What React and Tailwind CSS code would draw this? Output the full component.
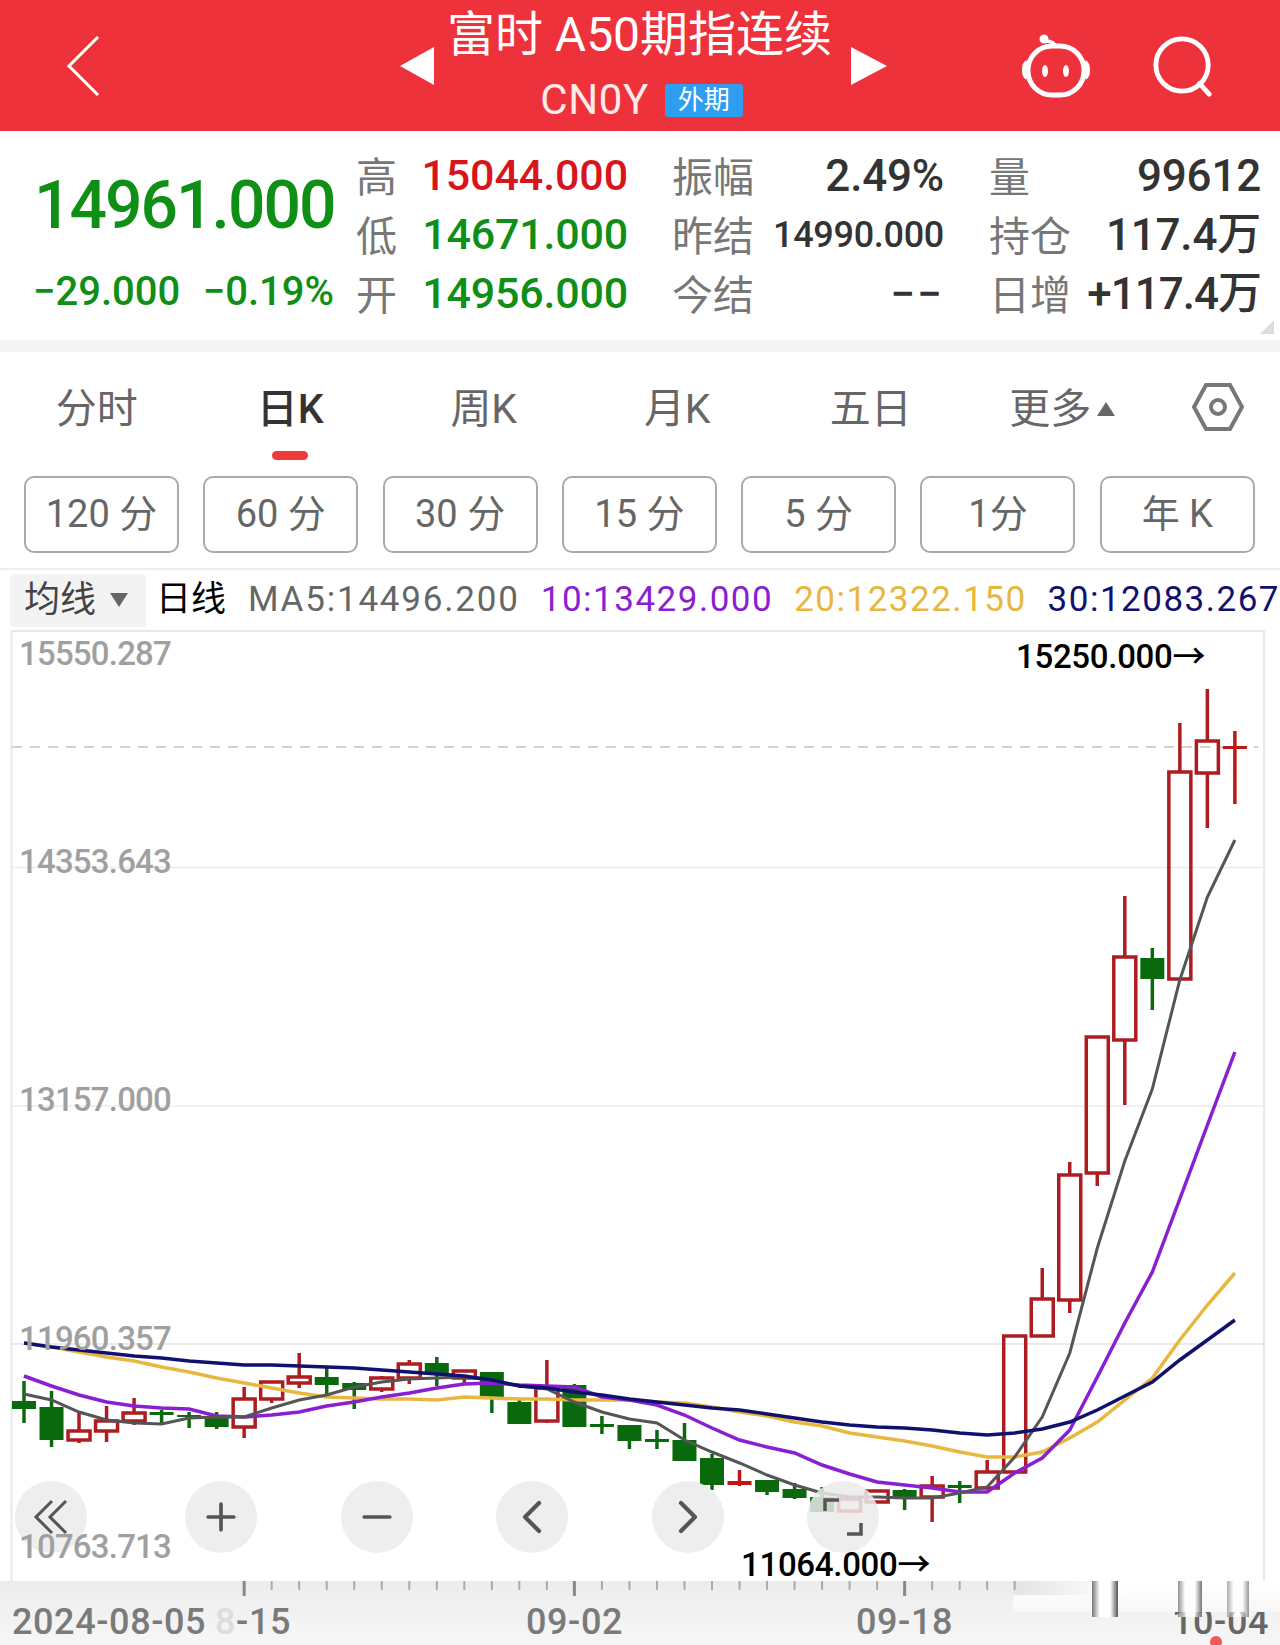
import React from "react";
import { ChevronLeft, ChevronRight, Minus, Plus } from "lucide-react";

const tabs = ["分时", "日K", "周K", "月K", "五日"];
const periods = ["120 分", "60 分", "30 分", "15 分", "5 分", "1分", "年 K"];

// [high, low, bodyTop, bodyBottom, type] r = hollow red, g = solid green, f = solid red
const candles = [
  [1381, 1423, 1401, 1409, "g"], [1391, 1447, 1407, 1440, "g"], [1413, 1443, 1431, 1440, "r"],
  [1406, 1442, 1421, 1431, "r"], [1398, 1425, 1413, 1421, "r"], [1410, 1424, 1412, 1415, "g"],
  [1412, 1428, 1415, 1417, "g"], [1412, 1429, 1417, 1427, "g"], [1387, 1438, 1399, 1427, "r"],
  [1382, 1403, 1382, 1399, "r"], [1353, 1388, 1377, 1383, "r"], [1368, 1395, 1377, 1385, "g"],
  [1382, 1409, 1383, 1390, "g"], [1376, 1392, 1378, 1389, "r"], [1360, 1384, 1364, 1378, "r"],
  [1357, 1386, 1363, 1375, "g"], [1371, 1383, 1371, 1378, "r"], [1372, 1413, 1372, 1398, "g"],
  [1398, 1424, 1402, 1424, "g"], [1360, 1423, 1388, 1421, "r"], [1384, 1427, 1385, 1427, "g"],
  [1416, 1434, 1424, 1427, "g"], [1425, 1449, 1425, 1441, "g"], [1430, 1449, 1439, 1442, "g"],
  [1423, 1461, 1440, 1461, "g"], [1454, 1490, 1458, 1485, "g"], [1470, 1486, 1481, 1485, "f"],
  [1480, 1495, 1480, 1492, "g"], [1483, 1499, 1489, 1498, "g"], [1487, 1512, 1497, 1512, "g"],
  [1497, 1513, 1499, 1511, "r"], [1490, 1502, 1491, 1502, "r"], [1489, 1510, 1490, 1498, "g"],
  [1476, 1522, 1486, 1497, "r"], [1481, 1503, 1485, 1488, "g"], [1460, 1488, 1472, 1488, "r"],
  [1335, 1472, 1336, 1472, "r"], [1268, 1337, 1299, 1336, "r"], [1162, 1313, 1175, 1300, "r"],
  [1036, 1186, 1037, 1173, "r"], [896, 1105, 957, 1040, "r"], [948, 1010, 958, 979, "g"],
  [723, 980, 772, 979, "r"], [689, 828, 741, 773, "r"], [731, 804, 746, 749, "f"],
];

const ma5 = [1394, 1400, 1412, 1420, 1423, 1424, 1418, 1417, 1417, 1408, 1400, 1395, 1387, 1382, 1379, 1378, 1377, 1380, 1386, 1389, 1402, 1412, 1419, 1423, 1440, 1452, 1463, 1475, 1485, 1493, 1497, 1497, 1498, 1498, 1493, 1487, 1457, 1417, 1353, 1248, 1161, 1089, 980, 897, 840];
const ma10 = [1376, 1386, 1395, 1402, 1406, 1408, 1409, 1416, 1417, 1415, 1412, 1406, 1402, 1397, 1393, 1388, 1384, 1383, 1385, 1386, 1387, 1397, 1400, 1405, 1415, 1428, 1440, 1447, 1453, 1465, 1474, 1482, 1485, 1488, 1492, 1492, 1473, 1458, 1430, 1377, 1323, 1272, 1199, 1125, 1052];
const ma20 = [1343, 1347, 1352, 1357, 1361, 1367, 1372, 1378, 1383, 1388, 1393, 1397, 1398, 1399, 1399, 1400, 1397, 1398, 1399, 1399, 1400, 1400, 1400, 1402, 1403, 1407, 1412, 1416, 1422, 1426, 1433, 1437, 1441, 1446, 1452, 1457, 1457, 1452, 1438, 1422, 1400, 1378, 1340, 1305, 1273];
const ma30 = [1343, 1347, 1350, 1353, 1356, 1358, 1361, 1363, 1365, 1365, 1366, 1367, 1368, 1370, 1372, 1374, 1376, 1380, 1386, 1388, 1392, 1395, 1399, 1402, 1405, 1408, 1410, 1414, 1418, 1422, 1425, 1427, 1428, 1430, 1433, 1435, 1433, 1429, 1422, 1410, 1396, 1382, 1360, 1340, 1320];

const cx = (i) => 24 + 27.52 * i;
const toPoints = (ys) => ys.map((y, i) => `${cx(i).toFixed(1)},${y}`).join(" ");

const Candle = ({ data, index }) => {
  const [high, low, top, bottom, type] = data;
  const x = cx(index);
  const color = type === "g" ? "#0b690d" : type === "f" ? "#c01616" : "#ad1c20";
  if (type === "r") {
    return (
      <g stroke={color} strokeWidth="3.5" fill="none">
        <line x1={x} x2={x} y1={high} y2={top} />
        <line x1={x} x2={x} y1={bottom} y2={low} />
        <rect x={x - 11} y={top} width="22" height={bottom - top} />
      </g>
    );
  }
  return (
    <g>
      <line x1={x} x2={x} y1={high} y2={low} stroke={color} strokeWidth="3.5" />
      <rect x={x - 12} y={top} width="24" height={bottom - top} fill={color} />
    </g>
  );
};

const Chart = () => (
  <svg viewBox="0 630 1280 951" className="block h-full w-full">
    <path d="M11.5 1581V631H1264V1581" fill="none" stroke="#e8e8e8" strokeWidth="2" />
    <line x1="12" x2="1264" y1="867.5" y2="867.5" stroke="#ececec" strokeWidth="1.5" />
    <line x1="12" x2="1264" y1="1106" y2="1106" stroke="#ececec" strokeWidth="1.5" />
    <line x1="12" x2="1264" y1="1344" y2="1344" stroke="#e4e4e4" strokeWidth="1.5" />
    <line x1="12" x2="1258" y1="747" y2="747" stroke="#c9c6b6" strokeWidth="1.5" strokeDasharray="10 8" />
    {candles.map((c, i) => (
      <Candle key={i} data={c} index={i} />
    ))}
    <polyline points={toPoints(ma20)} fill="none" stroke="#e8b740" strokeWidth="3.5" />
    <polyline points={toPoints(ma10)} fill="none" stroke="#8a1fd1" strokeWidth="3.5" />
    <polyline points={toPoints(ma5)} fill="none" stroke="#555555" strokeWidth="3" />
    <polyline points={toPoints(ma30)} fill="none" stroke="#10106e" strokeWidth="3.5" />
  </svg>
);

const AxisBackdrop = () => {
  const minor = [];
  for (let i = 8; i <= 36; i++) minor.push(i);
  return (
    <svg viewBox="0 1581 1280 64" className="absolute inset-0 h-full w-full">
      <defs>
        <linearGradient id="fade" x1="0" x2="1" y1="0" y2="0">
          <stop offset="0" stopColor="#e4e4e4" />
          <stop offset="1" stopColor="#ffffff" />
        </linearGradient>
        <linearGradient id="streak" x1="0" x2="1" y1="0" y2="0">
          <stop offset="0" stopColor="#777777" />
          <stop offset="0.3" stopColor="#ffffff" />
          <stop offset="0.7" stopColor="#ffffff" />
          <stop offset="1" stopColor="#555555" />
        </linearGradient>
        <linearGradient id="wash" x1="0" x2="0" y1="0" y2="1">
          <stop offset="0" stopColor="#ffffff" />
          <stop offset="1" stopColor="#f7f7f7" />
        </linearGradient>
      </defs>
      <rect x="1013" y="1581" width="267" height="31" fill="url(#wash)" />
      <rect x="1013" y="1581" width="110" height="14" fill="url(#fade)" />
      <rect x="1092" y="1581" width="26" height="36" fill="url(#streak)" />
      <rect x="1178" y="1581" width="24" height="36" fill="url(#streak)" opacity="0.8" />
      <rect x="1227" y="1581" width="22" height="36" fill="url(#streak)" opacity="0.6" />
      {minor.map((i) => {
        const major = i === 8 || i === 20 || i === 32;
        return (
          <line
            key={i}
            x1={cx(i)}
            x2={cx(i)}
            y1="1581"
            y2={major ? 1596 : 1590}
            stroke={major ? "#888888" : "#aaaaaa"}
            strokeWidth={major ? 3 : 2}
          />
        );
      })}
    </svg>
  );
};

const CircleButton = ({ left, children }) => (
  <div
    style={{ left }}
    className="absolute top-[851px] flex h-[72px] w-[72px] items-center justify-center rounded-full bg-[#ebebeb]/85 text-[#555555]"
  >
    {children}
  </div>
);

const StatRow = ({ label, value, valueClass }) => (
  <div className="flex h-[59px] items-center justify-between">
    <span className="pt-[4px] text-[41px] leading-[50px] text-[#777777]">{label}</span>
    <span className={valueClass}>{value}</span>
  </div>
);

const App = () => {
  const bigValue = "text-[44px] font-medium tracking-[-0.2px] text-[#333333]";
  const green = "text-[43px] font-medium tracking-[-0.2px] text-[#0f8f15]";
  const yLabel = "absolute left-[19px] text-[33px] font-medium tracking-[-0.8px] text-[#a0a0a0]";
  return (
    <div className="relative h-[1645px] w-[1280px] overflow-hidden bg-white font-['Roboto','Noto_Sans_CJK_SC',sans-serif]">
      <header className="flex h-[131px] items-center bg-[#ee323b] text-white">
        <svg viewBox="0 0 34 60" className="ml-[66px] h-[60px] w-[34px]" fill="none" stroke="white" strokeWidth="3">
          <path d="M32 1L3 30L32 59" />
        </svg>
        <svg viewBox="0 0 34 38" className="ml-[300px] h-[38px] w-[34px]">
          <path d="M34 0V38L0 19Z" fill="white" />
        </svg>
        <div className="flex w-[417px] flex-col items-center self-start pr-[6px] pt-[5px]">
          <div className="text-[48px] leading-[60px]">富时 A50期指连续</div>
          <div className="mt-[10px] flex items-center gap-[16px] pl-[4px]">
            <span className="text-[42px] leading-[50px] tracking-[0.6px] text-white/90">CN0Y</span>
            <span className="flex h-[33px] w-[78px] items-center justify-center rounded-[3px] bg-[#2f9df0] text-[26px]">外期</span>
          </div>
        </div>
        <svg viewBox="0 0 36 38" className="h-[38px] w-[36px]">
          <path d="M0 0V38L36 19Z" fill="white" />
        </svg>
        <svg viewBox="0 0 70 64" className="ml-[134px] h-[64px] w-[70px]" fill="none" stroke="white" strokeWidth="5">
          <circle cx="23" cy="5" r="3.5" fill="white" strokeWidth="2" />
          <path d="M24 7C30 7 34 9 34 13" strokeWidth="3.5" />
          <rect x="7" y="12" width="56" height="49" rx="24" />
          <path d="M6 28C2 30 2 42 6 44M64 28C68 30 68 42 64 44" strokeWidth="4" />
          <ellipse cx="24" cy="37" rx="3" ry="6" fill="white" stroke="none" />
          <ellipse cx="45" cy="37" rx="3" ry="6" fill="white" stroke="none" />
        </svg>
        <svg viewBox="0 0 64 64" className="ml-[61px] h-[62px] w-[62px]" fill="none" stroke="white" strokeWidth="5">
          <circle cx="31" cy="31" r="27" />
          <path d="M49 50L59 61" strokeLinecap="round" />
        </svg>
      </header>

      <section className="relative flex h-[209px] pt-[15px]">
        <div className="ml-[33px] flex w-[301px] flex-col">
          <div className="mt-[27px] pl-[1px] text-[66px] font-medium leading-[66px] tracking-[-2px] text-[#0f8f15]">14961.000</div>
          <div className="mt-[31px] flex justify-between text-[40px] font-medium leading-[44px] text-[#0f8f15]">
            <span>−29.000</span>
            <span>−0.19%</span>
          </div>
        </div>
        <div className="ml-[22px] w-[272px]">
          <StatRow label="高" value="15044.000" valueClass="text-[43px] font-medium tracking-[-0.1px] text-[#d8141c]" />
          <StatRow label="低" value="14671.000" valueClass={green} />
          <StatRow label="开" value="14956.000" valueClass={green} />
        </div>
        <div className="ml-[44px] w-[272px]">
          <StatRow label="振幅" value="2.49%" valueClass={bigValue} />
          <StatRow label="昨结" value="14990.000" valueClass="text-[36px] font-medium tracking-[-0.3px] text-[#333333]" />
          <StatRow label="今结" value="−−" valueClass="text-[44px] font-medium tracking-[2px] text-[#333333]" />
        </div>
        <div className="ml-[45px] w-[272px]">
          <StatRow label="量" value="99612" valueClass={bigValue} />
          <StatRow label="持仓" value="117.4万" valueClass={bigValue} />
          <StatRow label="日增" value="+117.4万" valueClass="text-[44px] font-medium tracking-[-1px] text-[#333333]" />
        </div>
        <svg viewBox="0 0 14 14" className="absolute right-[6px] bottom-[6px] h-[14px] w-[14px]">
          <path d="M14 0V14H0Z" fill="#dddddd" />
        </svg>
      </section>

      <div className="h-[12px] bg-[#f5f5f5]" />

      <nav className="relative flex h-[112px] items-start pt-[32px]">
        {tabs.map((tab) => (
          <div
            key={tab}
            className={`w-[193.5px] text-center text-[41px] leading-[50px] ${tab === "日K" ? "font-medium text-[#333333]" : "text-[#666666]"}`}
          >
            {tab}
          </div>
        ))}
        <div className="flex w-[193.5px] items-center justify-center gap-[6px] pr-[4px] text-[41px] leading-[50px] text-[#666666]">
          更多
          <svg viewBox="0 0 18 14" className="h-[14px] w-[18px]">
            <path d="M9 0L18 14H0Z" fill="#666666" />
          </svg>
        </div>
        <svg viewBox="0 0 52 48" className="ml-[31px] mt-[-1px] h-[48px] w-[52px]" fill="none" stroke="#777777" strokeWidth="4">
          <path d="M14 2H38L50 24L38 46H14L2 24Z" />
          <circle cx="26" cy="24" r="7" />
        </svg>
        <div className="absolute left-[272px] top-[99px] h-[9px] w-[36px] rounded-full bg-[#ee3a3a]" />
      </nav>

      <div className="flex h-[104px] gap-[24.3px] pl-[24px] pt-[12px]">
        {periods.map((p) => (
          <div
            key={p}
            className="flex h-[77px] w-[155px] items-center justify-center rounded-[10px] border-2 border-[#aaaaaa] text-[38px] text-[#666666]"
          >
            {p}
          </div>
        ))}
      </div>

      <div className="flex h-[62px] items-center overflow-hidden whitespace-nowrap border-t-2 border-[#eeeeee] pl-[10px] text-[35px]">
        <div className="flex h-[53px] w-[136px] items-center justify-center gap-[14px] rounded-[4px] bg-[#f3f3f3] pr-[4px] text-[36px] text-[#444444]">
          均线
          <svg viewBox="0 0 18 14" className="h-[14px] w-[18px]">
            <path d="M0 0H18L9 14Z" fill="#666666" />
          </svg>
        </div>
        <span className="ml-[10px] text-black">日线</span>
        <div className="ml-[22px] flex gap-[21px] tracking-[1.5px]">
          <span className="tracking-[1.8px] text-[#666666]">MA5:14496.200</span>
          <span className="text-[#8a1fd1]">10:13429.000</span>
          <span className="text-[#e8b740]">20:12322.150</span>
          <span className="text-[#10106e]">30:12083.267</span>
        </div>
      </div>

      <div className="relative h-[951px]">
        <Chart />
        <span className={`${yLabel} top-[-1px]`}>15550.287</span>
        <span className={`${yLabel} top-[207px]`}>14353.643</span>
        <span className={`${yLabel} top-[445px]`}>13157.000</span>
        <span className={`${yLabel} top-[684px]`}>11960.357</span>
        <span className="absolute left-[1016px] top-[2px] text-[33px] font-medium tracking-[-0.3px] text-black">15250.000→</span>
        <span className="absolute left-[741px] top-[910px] text-[33px] font-medium tracking-[-0.3px] text-black">11064.000→</span>

        <CircleButton left={15}>
          <svg viewBox="0 0 36 36" className="h-[36px] w-[36px]" fill="none" stroke="#555555" strokeWidth="3">
            <path d="M19 2L3 18L19 34M33 2L17 18L33 34" />
          </svg>
        </CircleButton>
        <CircleButton left={185}><Plus size={44} strokeWidth={2} /></CircleButton>
        <CircleButton left={341}><Minus size={44} strokeWidth={2} /></CircleButton>
        <CircleButton left={496}><ChevronLeft size={56} strokeWidth={1.8} /></CircleButton>
        <CircleButton left={652}><ChevronRight size={56} strokeWidth={1.8} /></CircleButton>
        <CircleButton left={807}>
          <svg viewBox="0 0 40 40" className="h-[40px] w-[40px]" fill="none" stroke="#555555" strokeWidth="3.5">
            <path d="M2 14V3H16M38 26V37H24" />
          </svg>
        </CircleButton>
        <span className={`${yLabel} top-[892px]`}>10763.713</span>
      </div>

      <div className="relative h-[64px] overflow-hidden bg-gradient-to-b from-[#ececec] to-[#f7f7f7] text-[36px] font-medium tracking-[0.6px] text-[#7a7a7a]">
        <span className="absolute left-[1172px] top-[14px] text-[#666666]">10-04</span>
        <AxisBackdrop />
        <span className="absolute left-[12px] top-[14px]">2024-08-05</span>
        <span className="absolute left-[215px] top-[14px]"><span className="text-[#dddddd]">8</span>-15</span>
        <span className="absolute left-[526px] top-[14px]">09-02</span>
        <span className="absolute left-[856px] top-[14px]">09-18</span>
        <div className="absolute left-[1210px] top-[55px] h-[12px] w-[12px] rounded-full bg-[#f05a5a]" />
      </div>
    </div>
  );
};

export default App;
